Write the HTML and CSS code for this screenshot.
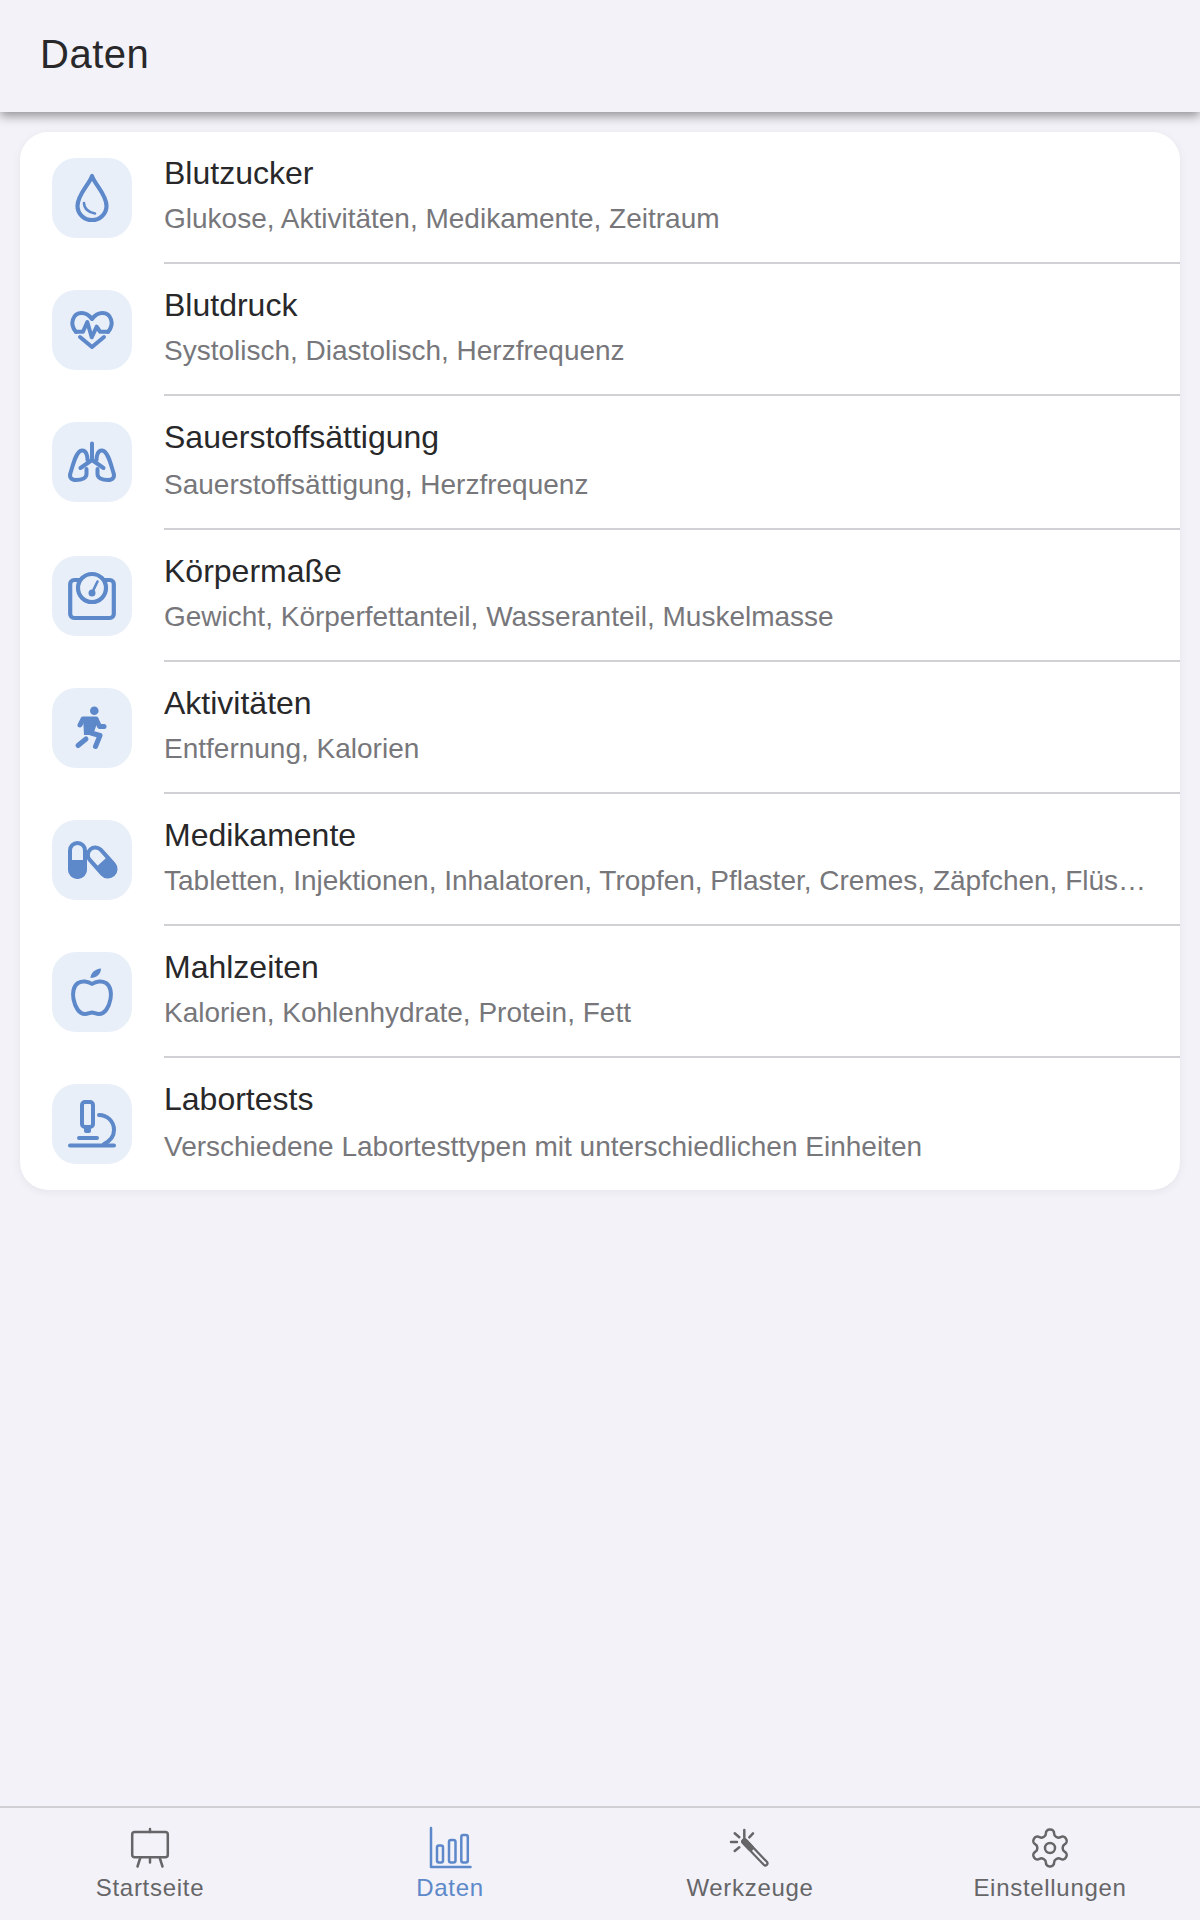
FILE: index.html
```html
<!DOCTYPE html>
<html lang="de">
<head>
<meta charset="utf-8">
<title>Daten</title>
<link rel="stylesheet" href="styles.css">
</head>
<body>
<header class="top-bar"><h1 class="top-title">Daten</h1></header>
<main class="content">
  <section class="card">
    <div class="row">
      <div class="icon-box"><svg class="ico" viewBox="0 0 48 48"><path d="M24 2C22 9.500 9.500 20 9.500 32a14.500 14 0 0 0 29 0C38.500 20 26 9.500 24 2Z"/><path class="thin" d="M16 29c0 5 4 9.500 11 10.500"/></svg></div>
      <div class="row-body"><div class="row-title">Blutzucker</div><div class="row-sub">Glukose, Aktivitäten, Medikamente, Zeitraum</div></div>
    </div>
    <div class="row">
      <div class="icon-box"><svg class="ico" viewBox="0 0 48 48"><path class="med" d="M8 26C1 18 5 7 13.500 7 18 7 21.500 9.500 24 13c2.500-3.500 6-6 10.500-6C43 7 47 18 40 26"/><path class="med" d="M8 25.700h7L19.300 16l4.400 15.300 5-10.600 3.300 5h8"/><path class="med" d="M12 31l12 10 12-10"/></svg></div>
      <div class="row-body"><div class="row-title">Blutdruck</div><div class="row-sub">Systolisch, Diastolisch, Herzfrequenz</div></div>
    </div>
    <div class="row">
      <div class="icon-box"><svg class="ico" viewBox="0 0 48 48"><path class="med" d="M24 5.500V22M24 22l-11.500 8M24 22l11.500 8"/><path class="med" d="M18.500 31v5c0 4-4.500 6-10.500 6-5 0-7-3-5.500-7C5 27 8 13 14 12.500c4-.3 5.500 4.500 5.500 9.500"/><path class="med" d="M29.500 31v5c0 4 4.500 6 10.500 6 5 0 7-3 5.500-7C43 27 40 13 34 12.500c-4-.3-5.500 4.500-5.500 9.500"/></svg></div>
      <div class="row-body"><div class="row-title">Sauerstoffsättigung</div><div class="row-sub row-sub-low">Sauerstoffsättigung, Herzfrequenz</div></div>
    </div>
    <div class="row">
      <div class="icon-box"><svg class="ico" viewBox="0 0 48 48"><rect x="2.200" y="8" width="43.600" height="38" rx="4"/><circle class="hole" cx="24" cy="16" r="14"/><path class="thin" d="M29.500 9.500L24 21"/><circle class="solid" cx="24" cy="21" r="3.500"/></svg></div>
      <div class="row-body"><div class="row-title">Körpermaße</div><div class="row-sub">Gewicht, Körperfettanteil, Wasseranteil, Muskelmasse</div></div>
    </div>
    <div class="row">
      <div class="icon-box"><svg class="ico" viewBox="0 0 48 48"><circle class="solid" cx="26.300" cy="6.700" r="4.300"/><path class="thick" d="M12 21l3-6h13l-5 14 9 2.500-4.500 11"/><path class="thick" d="M28.500 16l3 6.500H36"/><path class="thick" d="M10 41.500l8-6.500"/><path class="solid" d="M15 13h14l-4 18h-9z"/></svg></div>
      <div class="row-body"><div class="row-title">Aktivitäten</div><div class="row-sub">Entfernung, Kalorien</div></div>
    </div>
    <div class="row">
      <div class="icon-box"><svg class="ico" viewBox="0 0 48 48"><rect class="med" x="2" y="7" width="15" height="34" rx="7.500"/><path class="solid" d="M.3 24h18.400v9.500a9.200 9.200 0 0 1-18.400 0z"/><g transform="rotate(-42 33.700 26)"><rect class="med" x="26.200" y="9" width="15" height="34" rx="7.500"/><path class="solid" d="M24.500 26h18.400v8.500a9.200 9.200 0 0 1-18.400 0z"/></g></svg></div>
      <div class="row-body"><div class="row-title">Medikamente</div><div class="row-sub row-sub-clip">Tabletten, Injektionen, Inhalatoren, Tropfen, Pflaster, Cremes, Zäpfchen, Flüssigkeiten, Sprays</div></div>
    </div>
    <div class="row">
      <div class="icon-box"><svg class="ico" viewBox="0 0 48 48"><path class="med" d="M24 16c-4-3-10-3.500-14-1-5 3-5.500 11-4.500 16C7 39 11 46 17 46c3 0 5-1.500 7-1.500s4 1.500 7 1.500c6 0 10-7 11.500-15 1-5 .5-13-4.500-16-4-2.500-10-2-14 1z"/><path class="solid" d="M22.500 10c0-5 4.500-9 10.500-9.500C33 6 28.500 10 22.500 10z"/></svg></div>
      <div class="row-body"><div class="row-title">Mahlzeiten</div><div class="row-sub">Kalorien, Kohlenhydrate, Protein, Fett</div></div>
    </div>
    <div class="row row-last">
      <div class="icon-box"><svg class="ico" viewBox="0 0 48 48"><rect class="med" x="14" y="2" width="11" height="25" rx="3"/><path class="solid" d="M16 27h7v4a2 2 0 0 1-2 2h-3a2 2 0 0 1-2-2z"/><path class="med" d="M11 38h18M2 45.500h44"/><path class="med" d="M31 15c8 0 15 6 15 15 0 6-4 11-10 14"/></svg></div>
      <div class="row-body"><div class="row-title">Labortests</div><div class="row-sub row-sub-low">Verschiedene Labortesttypen mit unterschiedlichen Einheiten</div></div>
    </div>
  </section>
</main>
<nav class="tabs">
  <div class="tab">
    <svg class="tab-ico" viewBox="0 0 40 40"><rect x="2.200" y="4" width="35.600" height="25.300" rx="2.500"/><path d="M20 1v3M10.400 29.500L7.500 38.500M20 29.500v5M29.600 29.500l2.900 9"/></svg>
    <span class="tab-label">Startseite</span>
  </div>
  <div class="tab tab-active">
    <svg class="tab-ico" viewBox="0 0 40 40"><path d="M1 0v39h39.500"/><rect x="7" y="17.500" width="6" height="17" rx="2"/><rect x="19" y="12" width="6.500" height="22.500" rx="2"/><rect x="31.300" y="7" width="6.500" height="27.500" rx="2"/></svg>
    <span class="tab-label">Daten</span>
  </div>
  <div class="tab">
    <svg class="tab-ico" viewBox="0 0 40 40"><path class="wand" d="M14.500 13.500l20.800 21.800"/><path class="wand-core" d="M14.500 13.500l20.800 21.800"/><path class="wand-tip" d="M14.500 13.500l6 6.300"/><path d="M14.300 2v7.300M23 5.300l-3.700 4M4.700 5.300l4.600 4M1 14h6M4.700 23l4.600-3.700"/></svg>
    <span class="tab-label">Werkzeuge</span>
  </div>
  <div class="tab">
    <svg class="tab-ico" viewBox="1.200 1.200 21.600 21.600"><path class="gear" d="M12.220 2h-.44a2 2 0 0 0-2 2v.18a2 2 0 0 1-1 1.730l-.43.250a2 2 0 0 1-2 0l-.150-.080a2 2 0 0 0-2.730.730l-.220.380a2 2 0 0 0 .730 2.730l.150.100a2 2 0 0 1 1 1.720v.510a2 2 0 0 1-1 1.740l-.150.090a2 2 0 0 0-.730 2.730l.220.380a2 2 0 0 0 2.730.730l.150-.080a2 2 0 0 1 2 0l.430.250a2 2 0 0 1 1 1.730V20a2 2 0 0 0 2 2h.440a2 2 0 0 0 2-2v-.180a2 2 0 0 1 1-1.730l.430-.250a2 2 0 0 1 2 0l.150.080a2 2 0 0 0 2.730-.730l.220-.390a2 2 0 0 0-.730-2.730l-.150-.080a2 2 0 0 1-1-1.740v-.500a2 2 0 0 1 1-1.740l.150-.090a2 2 0 0 0 .730-2.730l-.220-.380a2 2 0 0 0-2.730-.730l-.150.080a2 2 0 0 1-2 0l-.430-.250a2 2 0 0 1-1-1.730V4a2 2 0 0 0-2-2z"/><circle class="gear" cx="12" cy="12" r="2.700"/></svg>
    <span class="tab-label">Einstellungen</span>
  </div>
</nav>
</body>
</html>
```

FILE: styles.css
```css
* { box-sizing: border-box; }
html, body { margin: 0; padding: 0; }
body {
  display: flex;
  flex-direction: column;
  height: 100vh;
  background: #f2f2f8;
  font-family: "Liberation Sans", Arial, sans-serif;
  overflow: hidden;
}
.top-bar {
  position: relative;
  z-index: 2;
  height: 112px;
  display: flex;
  align-items: center;
  padding: 0 40px 4px;
  background: #f2f2f8;
  box-shadow: 0 4px 10px rgba(0, 0, 0, 0.4);
}
.top-title {
  margin: 0;
  font-size: 40px;
  font-weight: 400;
  line-height: 48px;
  letter-spacing: 0.5px;
  color: #28282a;
}
.content { flex: 1; padding: 20px; min-height: 0; }
.card {
  background: #fff;
  border-radius: 28px;
  box-shadow: 0 2px 10px rgba(0, 0, 0, 0.06);
  overflow: hidden;
}
.row { display: flex; gap: 32px; padding-left: 32px; }
.icon-box {
  flex: none;
  width: 80px;
  height: 80px;
  margin-top: 26px;
  display: flex;
  align-items: center;
  justify-content: center;
  border-radius: 24px;
  background: #e8eff9;
}
.ico {
  width: 48px;
  height: 48px;
  overflow: visible;
  fill: none;
  stroke: #5d88c9;
  stroke-width: 4.2;
  stroke-linecap: round;
  stroke-linejoin: round;
}
.ico .thin { stroke-width: 2.6; }
.ico .med { stroke-width: 4; }
.ico .thick { stroke-width: 5; }
.ico .solid { fill: #5d88c9; stroke: none; }
.ico .hole { fill: #e8eff9; }
.row-body {
  flex: 1;
  min-width: 0;
  padding: 21px 0 25px;
  border-bottom: 2px solid #d0d0d5;
}
.row-last .row-body { border-bottom: 0; }
.row-title {
  font-size: 32px;
  line-height: 40px;
  color: #28282a;
}
.row-sub {
  margin-top: 8px;
  font-size: 28px;
  line-height: 36px;
  color: #77777b;
}
.row-sub-low { margin-top: 10px; }
.row-sub-clip {
  padding-right: 28px;
  white-space: nowrap;
  overflow: hidden;
  text-overflow: ellipsis;
}
.tabs {
  flex: none;
  display: grid;
  grid-template-columns: repeat(4, 1fr);
  padding: 20px 0 18px;
  border-top: 2px solid #d0d0d5;
  background: #f2f2f8;
}
.tab {
  display: flex;
  flex-direction: column;
  align-items: center;
  gap: 6px;
  color: #666668;
}
.tab-active { color: #5d88c9; }
.tab-ico {
  width: 40px;
  height: 40px;
  overflow: visible;
  fill: none;
  stroke: currentColor;
  stroke-width: 2.5;
  stroke-linecap: round;
  stroke-linejoin: round;
}
.tab-ico .gear { stroke-width: 1.35; }
.tab-ico .wand { stroke-width: 6.5; }
.tab-ico .wand-core { stroke: #f2f2f8; stroke-width: 2; }
.tab-ico .wand-tip { stroke-width: 6.5; }
.tab-label {
  font-size: 24px;
  line-height: 28px;
  letter-spacing: 0.7px;
}
```
